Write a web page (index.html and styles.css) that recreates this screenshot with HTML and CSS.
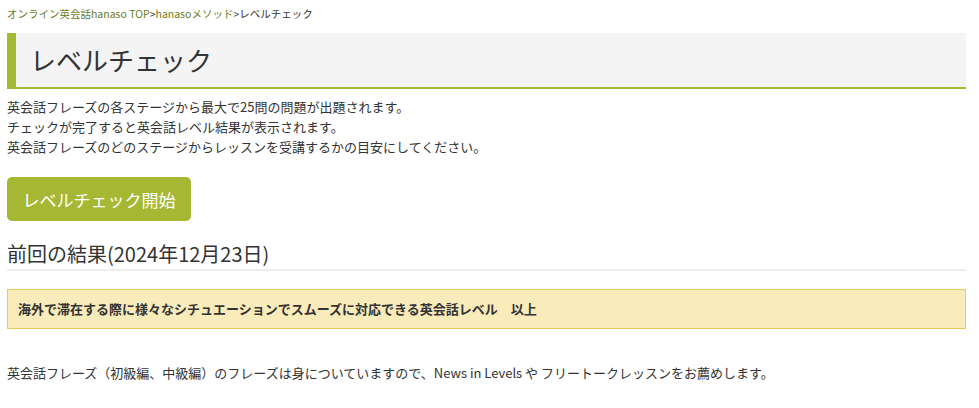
FILE: index.html
```html
<!DOCTYPE html>
<html lang="ja">
<head>
<meta charset="utf-8">
<title>レベルチェック</title>
<link rel="stylesheet" href="styles.css">
</head>
<body>
<div class="page">
  <nav class="breadcrumb">
    <a href="#">オンライン英会話hanaso TOP</a>&gt;<a href="#">hanasoメソッド</a>&gt;<span>レベルチェック</span>
  </nav>
  <h1 class="page-title">レベルチェック</h1>
  <p class="intro">英会話フレーズの各ステージから最大で25問の問題が出題されます。<br>チェックが完了すると英会話レベル結果が表示されます。<br>英会話フレーズのどのステージからレッスンを受講するかの目安にしてください。</p>
  <a class="start-btn" href="#">レベルチェック開始</a>
  <h2 class="result-title">前回の結果(2024年12月23日)</h2>
  <div class="result-box">海外で滞在する際に様々なシチュエーションでスムーズに対応できる英会話レベル　以上</div>
  <p class="advice">英会話フレーズ（初級編、中級編）のフレーズは身についていますので、News in Levels や フリートークレッスンをお薦めします。</p>
</div>
</body>
</html>
```

FILE: styles.css
```css
* { box-sizing: border-box; }
html, body { margin: 0; padding: 0; background: #fff; }
body {
  font-family: "Noto Sans CJK JP", "Noto Sans", sans-serif;
  color: #333;
}
.page {
  padding: 0 13px 0 7px;
}
.breadcrumb {
  font-size: 10.5px;
  line-height: 16px;
  padding-top: 6px;
  color: #333;
}
.breadcrumb a {
  color: #6e7c1c;
  text-decoration: none;
}
.page-title {
  margin: 11px 0 0;
  background: #f4f4f4;
  border-left: 9px solid #a5b833;
  border-bottom: 2px solid #a5b833;
  height: 56px;
  padding-left: 14px;
  font-size: 26px;
  font-weight: normal;
  line-height: 54px;
  color: #333;
}
.intro {
  margin: 8px 0 0;
  font-size: 13px;
  line-height: 20px;
}
.start-btn {
  display: inline-flex;
  align-items: center;
  justify-content: center;
  margin-top: 20px;
  width: 184px;
  height: 44px;
  background: #a6b833;
  border-radius: 5px;
  color: #fff;
  font-size: 17px;
  text-decoration: none;
}
.result-title {
  margin: 18px 0 0;
  font-size: 20px;
  font-weight: normal;
  line-height: 30px;
  border-bottom: 2px solid #eeeeee;
  color: #333;
}
.result-box {
  margin-top: 18px;
  height: 40px;
  padding: 0 10px;
  background: #faebbb;
  border: 1px solid #e8c95c;
  font-size: 13px;
  font-weight: bold;
  line-height: 38px;
  color: #333;
}
.advice {
  margin: 34px 0 0;
  font-size: 13px;
  line-height: 20px;
}
```
